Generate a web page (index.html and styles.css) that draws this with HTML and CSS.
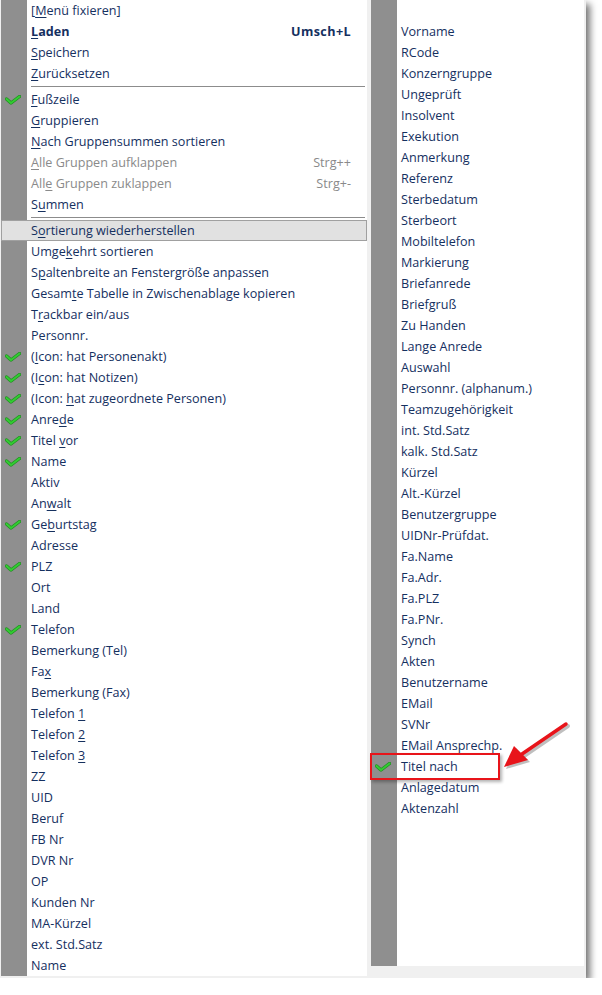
FILE: index.html
```html
<!DOCTYPE html>
<html lang="de">
<head>
<meta charset="utf-8">
<title>Menü</title>
<link rel="stylesheet" href="styles.css">
</head>
<body>
<svg width="0" height="0" class="defs" aria-hidden="true">
  <defs>
    <symbol id="chk" viewBox="0 0 16 10">
      <polyline points="1.5,4 6,8 14.5,1.5" fill="none" stroke="#1f8f1f" stroke-width="3.4" stroke-linecap="round" stroke-linejoin="round"/>
      <polyline points="1.5,4 6,8 14.5,1.5" fill="none" stroke="#33cc33" stroke-width="2" stroke-linecap="round" stroke-linejoin="round"/>
    </symbol>
  </defs>
</svg>
<div class="window">
  <div class="col col-left">
    <div class="row"><span class="lbl">[<u>M</u>enü fixieren]</span></div>
    <div class="row bold"><span class="lbl"><u>L</u>aden</span><span class="key">Umsch+L</span></div>
    <div class="row"><span class="lbl"><u>S</u>peichern</span></div>
    <div class="row"><span class="lbl"><u>Z</u>urücksetzen</span></div>
    <div class="sep"></div>
    <div class="row"><svg class="check"><use href="#chk"/></svg><span class="lbl"><u>F</u>ußzeile</span></div>
    <div class="row"><span class="lbl"><u>G</u>ruppieren</span></div>
    <div class="row"><span class="lbl"><u>N</u>ach Gruppensummen sortieren</span></div>
    <div class="row disabled"><span class="lbl"><u>A</u>lle Gruppen aufklappen</span><span class="key">Strg++</span></div>
    <div class="row disabled"><span class="lbl">All<u>e</u> Gruppen zuklappen</span><span class="key">Strg+-</span></div>
    <div class="row"><span class="lbl">S<u>u</u>mmen</span></div>
    <div class="sep"></div>
    <div class="row hot"><span class="lbl">S<u>o</u>rtierung wiederherstellen</span></div>
    <div class="row"><span class="lbl">Umge<u>k</u>ehrt sortieren</span></div>
    <div class="row"><span class="lbl">S<u>p</u>altenbreite an Fenstergröße anpassen</span></div>
    <div class="row"><span class="lbl">Gesam<u>t</u>e Tabelle in Zwischenablage kopieren</span></div>
    <div class="row"><span class="lbl">T<u>r</u>ackbar ein/aus</span></div>
    <div class="row"><span class="lbl">Personnr.</span></div>
    <div class="row"><svg class="check"><use href="#chk"/></svg><span class="lbl">(<u>I</u>con: hat Personenakt)</span></div>
    <div class="row"><svg class="check"><use href="#chk"/></svg><span class="lbl">(I<u>c</u>on: hat Notizen)</span></div>
    <div class="row"><svg class="check"><use href="#chk"/></svg><span class="lbl">(Icon: <u>h</u>at zugeordnete Personen)</span></div>
    <div class="row"><svg class="check"><use href="#chk"/></svg><span class="lbl">Anre<u>d</u>e</span></div>
    <div class="row"><svg class="check"><use href="#chk"/></svg><span class="lbl">Titel <u>v</u>or</span></div>
    <div class="row"><svg class="check"><use href="#chk"/></svg><span class="lbl">Name</span></div>
    <div class="row"><span class="lbl">Aktiv</span></div>
    <div class="row"><span class="lbl">An<u>w</u>alt</span></div>
    <div class="row"><svg class="check"><use href="#chk"/></svg><span class="lbl">Ge<u>b</u>urtstag</span></div>
    <div class="row"><span class="lbl">Adresse</span></div>
    <div class="row"><svg class="check"><use href="#chk"/></svg><span class="lbl">PLZ</span></div>
    <div class="row"><span class="lbl">Ort</span></div>
    <div class="row"><span class="lbl">Land</span></div>
    <div class="row"><svg class="check"><use href="#chk"/></svg><span class="lbl">Telefon</span></div>
    <div class="row"><span class="lbl">Bemerkung (Tel)</span></div>
    <div class="row"><span class="lbl">Fa<u>x</u></span></div>
    <div class="row"><span class="lbl">Bemerkung (Fax)</span></div>
    <div class="row"><span class="lbl">Telefon <u>1</u></span></div>
    <div class="row"><span class="lbl">Telefon <u>2</u></span></div>
    <div class="row"><span class="lbl">Telefon <u>3</u></span></div>
    <div class="row"><span class="lbl">ZZ</span></div>
    <div class="row"><span class="lbl">UID</span></div>
    <div class="row"><span class="lbl">Beruf</span></div>
    <div class="row"><span class="lbl">FB Nr</span></div>
    <div class="row"><span class="lbl">DVR Nr</span></div>
    <div class="row"><span class="lbl">OP</span></div>
    <div class="row"><span class="lbl">Kunden Nr</span></div>
    <div class="row"><span class="lbl">MA-Kürzel</span></div>
    <div class="row"><span class="lbl">ext. Std.Satz</span></div>
    <div class="row"><span class="lbl">Name</span></div>
  </div>
  <div class="col col-right">
    <div class="row"><span class="lbl">Vorname</span></div>
    <div class="row"><span class="lbl">RCode</span></div>
    <div class="row"><span class="lbl">Konzerngruppe</span></div>
    <div class="row"><span class="lbl">Ungeprüft</span></div>
    <div class="row"><span class="lbl">Insolvent</span></div>
    <div class="row"><span class="lbl">Exekution</span></div>
    <div class="row"><span class="lbl">Anmerkung</span></div>
    <div class="row"><span class="lbl">Referenz</span></div>
    <div class="row"><span class="lbl">Sterbedatum</span></div>
    <div class="row"><span class="lbl">Sterbeort</span></div>
    <div class="row"><span class="lbl">Mobiltelefon</span></div>
    <div class="row"><span class="lbl">Markierung</span></div>
    <div class="row"><span class="lbl">Briefanrede</span></div>
    <div class="row"><span class="lbl">Briefgruß</span></div>
    <div class="row"><span class="lbl">Zu Handen</span></div>
    <div class="row"><span class="lbl">Lange Anrede</span></div>
    <div class="row"><span class="lbl">Auswahl</span></div>
    <div class="row"><span class="lbl">Personnr. (alphanum.)</span></div>
    <div class="row"><span class="lbl">Teamzugehörigkeit</span></div>
    <div class="row"><span class="lbl">int. Std.Satz</span></div>
    <div class="row"><span class="lbl">kalk. Std.Satz</span></div>
    <div class="row"><span class="lbl">Kürzel</span></div>
    <div class="row"><span class="lbl">Alt.-Kürzel</span></div>
    <div class="row"><span class="lbl">Benutzergruppe</span></div>
    <div class="row"><span class="lbl">UIDNr-Prüfdat.</span></div>
    <div class="row"><span class="lbl">Fa.Name</span></div>
    <div class="row"><span class="lbl">Fa.Adr.</span></div>
    <div class="row"><span class="lbl">Fa.PLZ</span></div>
    <div class="row"><span class="lbl">Fa.PNr.</span></div>
    <div class="row"><span class="lbl">Synch</span></div>
    <div class="row"><span class="lbl">Akten</span></div>
    <div class="row"><span class="lbl">Benutzername</span></div>
    <div class="row"><span class="lbl">EMail</span></div>
    <div class="row"><span class="lbl">SVNr</span></div>
    <div class="row"><span class="lbl">EMail Ansprechp.</span></div>
    <div class="row marked"><svg class="check"><use href="#chk"/></svg><span class="lbl">Titel nach</span></div>
    <div class="row"><span class="lbl">Anlagedatum</span></div>
    <div class="row"><span class="lbl">Aktenzahl</span></div>
  </div>
  <div class="callout"></div>
  <svg class="arrow" width="80" height="60" viewBox="0 0 80 60">
    <g class="arrow-shadow" transform="translate(2,2)">
      <line x1="68" y1="8" x2="24" y2="38" stroke="rgba(0,0,0,0.25)" stroke-width="4" stroke-linecap="round"/>
      <polygon points="6,51 16,30 30,44" fill="rgba(0,0,0,0.25)"/>
    </g>
    <line x1="68" y1="8" x2="24" y2="38" stroke="#e8141a" stroke-width="3.5" stroke-linecap="round"/>
    <polygon points="6,51 16,30 30,44" fill="#e8141a"/>
  </svg>
</div>
</body>
</html>
```
FILE: styles.css
```css
html, body {
  margin: 0;
  padding: 0;
  background: #ffffff;
}

.defs {
  position: absolute;
  width: 0;
  height: 0;
}

.window {
  position: relative;
  display: flex;
  align-items: flex-start;
  gap: 4px;
  width: 586px;
  height: 978px;
  background: #f0f0f0;
  box-shadow: 4px 4px 7px rgba(0, 0, 0, 0.55);
  font-family: "Open Sans", "Noto Sans", "DejaVu Sans", sans-serif;
  font-size: 12.6px;
  color: #15305f;
}

.col {
  display: flex;
  flex-direction: column;
  background: linear-gradient(to right, #8f8f8f 26px, #ffffff 26px);
}

.col-left {
  margin-left: 1px;
  width: 366px;
  height: 976px;
}

.col-right {
  width: 213px;
  height: 966px;
  padding-top: 21px;
  box-sizing: border-box;
}

.row {
  position: relative;
  display: flex;
  align-items: center;
  height: 21px;
  padding-left: 30px;
  padding-right: 16px;
  box-sizing: border-box;
  white-space: nowrap;
}

.lbl {
  flex: 1;
}

.key {
  text-align: right;
}

.bold {
  font-weight: 700;
}

.bold .key {
  letter-spacing: 0.4px;
}

.disabled {
  color: #8a8a8a;
}

.hot {
  background: #e1e1e1;
  border: 1px solid #a0a0a0;
  padding-left: 29px;
}

u {
  text-decoration: underline;
  text-underline-offset: 2px;
}

.sep {
  height: 5px;
  position: relative;
}

.sep::after {
  content: "";
  position: absolute;
  left: 30px;
  right: 2px;
  top: 2px;
  height: 1px;
  background: #8c8c8c;
}

.check {
  position: absolute;
  left: 4px;
  top: 6px;
  width: 16px;
  height: 10px;
}

.callout {
  position: absolute;
  left: 370px;
  top: 753px;
  width: 130px;
  height: 27px;
  border: 2px solid #e8141a;
  box-sizing: border-box;
  box-shadow: 2px 2px 3px rgba(0, 0, 0, 0.3);
}

.arrow {
  position: absolute;
  left: 498px;
  top: 716px;
}
```
